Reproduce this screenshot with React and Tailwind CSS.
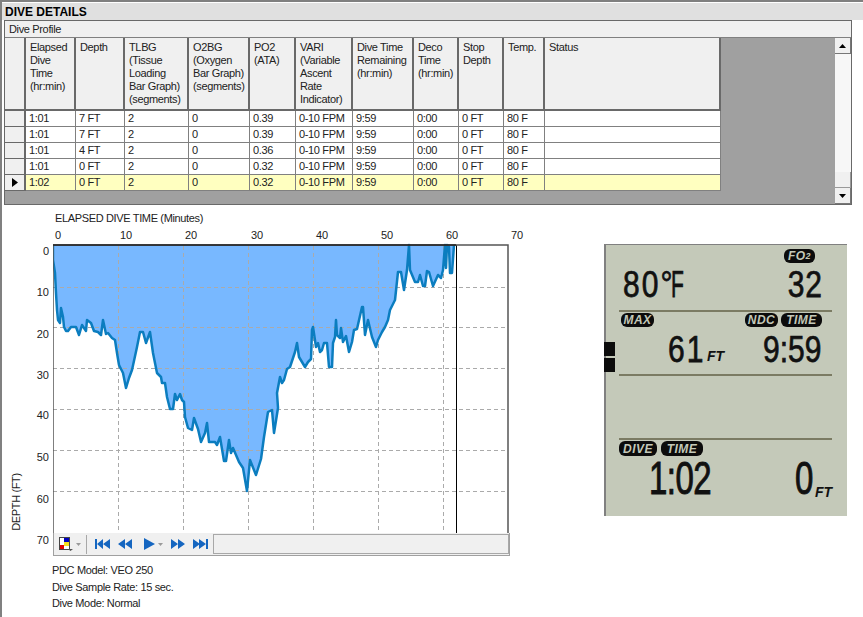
import React from 'react';

const columns = [
  ['Elapsed', 'Dive', 'Time', '(hr:min)'],
  ['Depth'],
  ['TLBG', '(Tissue', 'Loading', 'Bar Graph)', '(segments)'],
  ['O2BG', '(Oxygen', 'Bar Graph)', '(segments)'],
  ['PO2', '(ATA)'],
  ['VARI', '(Variable', 'Ascent', 'Rate', 'Indicator)'],
  ['Dive Time', 'Remaining', '(hr:min)'],
  ['Deco', 'Time', '(hr:min)'],
  ['Stop', 'Depth'],
  ['Temp.'],
  ['Status'],
];

const rows = [
  ['1:01', '7 FT', '2', '0', '0.39', '0-10 FPM', '9:59', '0:00', '0 FT', '80 F', ''],
  ['1:01', '7 FT', '2', '0', '0.39', '0-10 FPM', '9:59', '0:00', '0 FT', '80 F', ''],
  ['1:01', '4 FT', '2', '0', '0.36', '0-10 FPM', '9:59', '0:00', '0 FT', '80 F', ''],
  ['1:01', '0 FT', '2', '0', '0.32', '0-10 FPM', '9:59', '0:00', '0 FT', '80 F', ''],
  ['1:02', '0 FT', '2', '0', '0.32', '0-10 FPM', '9:59', '0:00', '0 FT', '80 F', ''],
];

const gridCols = 'grid grid-cols-[21px_50px_49px_64px_61px_46px_57px_61px_45px_45px_41px_176px]';

// dive trace, screen coordinates traced from the reference
const descent = [[53,245],[53,260],[55,273],[56,293],[57,310],[58,320],[60,323],[61,308],[63,317],[64,327],[66,331],[68,331],[71,327],[76,327],[79,335],[82,325],[86,331],[87,320],[91,323],[94,331],[98,332],[101,335],[103,320],[106,334],[108,333],[112,338],[115,340],[117,353],[119,365],[123,373],[126,388],[129,378],[132,370],[137,347],[140,332],[143,332],[146,343],[150,332],[153,353],[157,373],[161,377],[162,383],[165,383],[167,397],[170,409],[173,409],[175,394],[177,400],[180,394],[182,400],[184,402]];
const bottom = [[185,417],[188,428],[192,430],[194,418],[198,429],[201,442],[205,433],[207,423],[209,442],[215,442],[217,445],[220,437],[224,461],[226,461],[229,440],[231,453],[233,448],[239,462],[243,468],[247,491],[250,460],[256,475],[261,459],[264,437],[268,412],[272,410],[274,433],[278,408]];
const ascent = [[277,393],[280,377],[282,383],[284,380],[287,369],[290,367],[295,352],[297,343],[299,357],[305,367],[308,362],[311,359],[312,330],[313,327],[316,347],[318,343],[320,352],[322,350],[324,343],[327,343],[329,367],[332,367],[333,343],[335,337],[336,320],[337,335],[340,338],[341,328],[343,342],[346,336],[349,352],[352,342],[354,330],[357,329],[362,307],[363,307],[365,335],[368,320],[372,337],[376,347],[378,340],[382,332],[385,327],[388,320],[390,310],[395,300],[398,272],[401,272],[404,290],[407,270],[409,245],[410,270],[415,282],[418,282],[420,275],[423,286],[425,286],[427,271],[429,272],[433,286],[438,275],[441,278],[443,270],[445,245],[446,268],[447,245],[449,247],[450,273],[452,273],[454,245]];
const trace = [...descent, ...bottom, ...ascent];
const tracePath = trace.map(([x, y]) => `${x},${y}`).join(' ');

const xTicks = [[58, '0'], [126, '10'], [191, '20'], [257, '30'], [322, '40'], [387, '50'], [452, '60'], [517, '70']];
const yTicks = [[255, '0'], [296, '10'], [338, '20'], [379, '30'], [419, '40'], [461, '50'], [503, '60'], [544, '70']];

const ProfileChart = () => (
  <svg width="472" height="320" viewBox="53 213 472 320" className="block">
    <text x="55" y="222" className="text-[11px] fill-[#222]">ELAPSED DIVE TIME (Minutes)</text>
    {xTicks.map(([x, label]) => (
      <text key={label} x={x} y="239" textAnchor="middle" className="text-[11px] tracking-normal fill-[#222]">{label}</text>
    ))}
    <rect x="53" y="245" width="455" height="288" fill="#fff" />
    <polygon points={`${tracePath} 454,245`} fill="#78b8ff" />
    {[118, 183, 248, 313, 378, 443].map((x) => (
      <line key={x} x1={x + 0.5} y1="246" x2={x + 0.5} y2="533" stroke="#aaa" strokeDasharray="4 3" />
    ))}
    {[287, 327, 368, 409, 450, 491].map((y) => (
      <line key={y} x1="53" y1={y + 0.5} x2="508" y2={y + 0.5} stroke="#aaa" strokeDasharray="4 3" />
    ))}
    <polyline points={tracePath} fill="none" stroke="#0b7dbf" strokeWidth="2.5" strokeLinejoin="round" />
    <line x1="456.5" y1="245" x2="456.5" y2="533" stroke="#000" />
    <path d="M53 533V245H508V533" fill="none" stroke="#555" strokeWidth="1.5" />
    <line x1="53" y1="245" x2="456" y2="245" stroke="#222" strokeWidth="1.5" />
  </svg>
);

const DepthAxis = () => (
  <svg width="51" height="343" viewBox="2 213 51 343" className="block shrink-0">
    {yTicks.map(([y, label]) => (
      <text key={label} x="49" y={y} textAnchor="end" className="text-[11px] tracking-normal fill-[#222]">{label}</text>
    ))}
    <text x="20" y="502" textAnchor="middle" transform="rotate(-90 20 502)" className="text-[11px] fill-[#222]">DEPTH (FT)</text>
  </svg>
);

const SmallArrow = () => (
  <svg width="5" height="3" viewBox="0 0 5 3" className="block"><polygon points="0,0 5,0 2.5,3" fill="#9a9a9a" /></svg>
);

const ColorIcon = () => (
  <svg width="14" height="14" viewBox="0 0 14 14" className="block">
    <rect x="0.5" y="0.5" width="10" height="12" fill="#fff" stroke="#444" />
    <rect x="5" y="1" width="5" height="4" fill="#0000c0" />
    <rect x="5" y="5" width="5" height="4" fill="#f5e020" />
    <rect x="1" y="8" width="4" height="4" fill="#e00000" />
    <polygon points="9,12 14,12 11.5,14" fill="#555" />
  </svg>
);

const NavIcon = ({ d }) => (
  <svg width="15" height="10" viewBox="0 0 15 10" className="block"><path d={d} fill="#1566c0" /></svg>
);

const Toolbar = () => (
  <div className="flex h-[23px] w-[457px] items-center border border-t-0 border-[#a0a0a0] bg-[#f0f0f0]">
    <div className="ml-[5px]"><ColorIcon /></div>
    <div className="ml-[3px]"><SmallArrow /></div>
    <div className="ml-[5px] h-[19px] w-px bg-[#a8a8a8]" />
    <div className="ml-[8px]"><NavIcon d="M0 0h2v10H0zM2 5l6-5v10zM8 5l7-5v10z" /></div>
    <div className="ml-[8px]"><NavIcon d="M0 5l7-5v10zM7 5l7-5v10z" /></div>
    <svg width="11" height="12" viewBox="0 0 11 12" className="ml-[11px] block"><polygon points="0,0 11,6 0,12" fill="#1566c0" /></svg>
    <div className="ml-[3px]"><SmallArrow /></div>
    <div className="ml-[8px]"><NavIcon d="M0 0l7 5-7 5zM7 0l7 5-7 5z" /></div>
    <div className="ml-[7px]"><NavIcon d="M0 0l7 5-7 5zM6 0l7 5-7 5zM13 0h2v10h-2z" /></div>
    <div className="ml-[5px] h-[20px] flex-1 border border-[#a8a8a8] bg-[#f0f0f0]" />
  </div>
);

const Pill = ({ children, className = '' }) => (
  <span className={`flex h-[14px] items-center justify-center rounded-[6px] bg-[#0c0c0c] text-[12px] font-bold italic leading-none tracking-[0.5px] text-[#c4c9b9] ${className}`}>
    {children}
  </span>
);

const LcdLine = () => <div className="ml-[13px] mr-[15px] h-[2px] bg-[#7b7b63]" />;

const Lcd = () => (
  <div className="relative mt-[31px] h-[272px] w-[243px] border-l-2 border-t border-[#808080] bg-[#c4c9b9] tracking-normal text-[#111]">
    <div className="flex justify-end pr-[32px] pt-[4px]"><Pill className="w-[31px]">FO<span className="text-[9px]">2</span></Pill></div>
    <div className="mt-[7px] flex h-[27px] justify-between pl-[17px] pr-[24px] text-[30px] leading-[27px] [-webkit-text-stroke:0.6px_#111]">
      <span className="scale-y-[1.25] tracking-[2px]">80<span className="tracking-[-1px]">°</span><span className="inline-block origin-left scale-x-[.7]">F</span></span>
      <span className="scale-y-[1.25] tracking-[1px]">32</span>
    </div>
    <div className="mt-[13px]"><LcdLine /></div>
    <div className="mt-px flex pl-[15px]">
      <Pill className="w-[33px]">MAX</Pill>
      <Pill className="ml-[91px] w-[33px]">NDC</Pill>
      <Pill className="ml-[3px] w-[41px]">TIME</Pill>
    </div>
    <div className="mt-[8px] flex h-[27px] pl-[62px] text-[30px] leading-[27px] [-webkit-text-stroke:0.6px_#111]">
      <span className="w-[39px] scale-y-[1.25] tracking-[2px]">61</span>
      <span className="mt-[16px] h-[11px] w-[16px] text-[14px] font-bold italic leading-[11px] [-webkit-text-stroke:0]">FT</span>
      <span className="ml-[40px] scale-y-[1.25]">9:59</span>
    </div>
    <div className="mt-[12px]"><LcdLine /></div>
    <div className="mt-[62px]"><LcdLine /></div>
    <div className="mt-px flex pl-[13px]">
      <Pill className="h-[15px] w-[38px]">DIVE</Pill>
      <Pill className="ml-[4px] h-[15px] w-[42px]">TIME</Pill>
    </div>
    <div className="mt-[10px] flex h-[26px] pl-[43px] text-[33px] leading-[26px] [-webkit-text-stroke:0.7px_#111]">
      <span className="w-[146px] scale-y-[1.38] tracking-[-0.5px]">1:02</span>
      <span className="w-[20px] scale-y-[1.38]">0</span>
      <span className="mt-[21px] h-[11px] text-[14px] font-bold italic leading-[11px] [-webkit-text-stroke:0]">FT</span>
    </div>
    {/* ascent bar sits over the left edge of the display */}
    <div className="absolute left-[-2px] top-[97px] h-[14px] w-[11px] bg-[#0c0c0c]" />
    <div className="absolute left-[-2px] top-[113px] h-[14px] w-[11px] bg-[#0c0c0c]" />
  </div>
);

const ScrollButton = ({ up }) => (
  <div className="flex h-[16px] w-[16px] items-center justify-center border-b border-r border-[#777] border-l-white border-t-white bg-[#f0f0f0]">
    <svg width="7" height="4" viewBox="0 0 7 4" className="block">
      <polygon points={up ? '0,4 7,4 3.5,0' : '0,0 7,0 3.5,4'} fill="#000" />
    </svg>
  </div>
);

const Scrollbar = () => (
  <div className="flex w-[16px] flex-col bg-[#f7f7f7]">
    <ScrollButton up />
    <div className="flex-1" />
    <div className="h-[16px] w-[16px] border-b border-r border-[#999] bg-[#f0f0f0]" />
    <ScrollButton />
  </div>
);

const App = () => {
  return (
    <div className="h-[617px] w-[863px] overflow-hidden border-l-2 border-t-2 border-[#808080] bg-white text-[11px] tracking-[-0.35px] text-[#222] font-['Liberation_Sans',sans-serif]">
      <div className="mt-px flex h-[17px] items-center bg-[#e0e0e0] pl-[3px] text-[12px] font-bold leading-none tracking-normal text-black">DIVE DETAILS</div>

      {/* Dive Profile panel */}
      <div className="ml-[2px] w-[848px] border border-[#696969]">
        <div className="flex h-[17px] items-center border-b border-[#808080] bg-[#f0f0f0] pl-[4px]">Dive Profile</div>
        <div className="flex h-[166px]">
          <div className="flex-1 bg-[#a0a0a0]">
            <div className={`${gridCols} h-[73px]`}>
              <div className="border-b-2 border-r-2 border-[#696969] bg-[#f0f0f0]" />
              {columns.map((lines) => (
                <div key={lines[0]} className="border-b-2 border-r-2 border-[#696969] bg-[#f0f0f0] pl-[4px] pt-[3px] leading-[13px]">
                  {lines.map((line) => <div key={line}>{line}</div>)}
                </div>
              ))}
            </div>
            {rows.map((row, i) => {
              const selected = i === rows.length - 1;
              return (
                <div key={i} className={`${gridCols} h-[16px]`}>
                  <div className="flex items-center justify-center border-b border-r-2 border-[#696969] bg-[#f0f0f0]">
                    {selected && (
                      <svg width="6" height="9" viewBox="0 0 6 9" className="block"><polygon points="0,0 6,4.5 0,9" fill="#000" /></svg>
                    )}
                  </div>
                  {row.map((cell, j) => (
                    <div key={j} className={`border-b border-r border-[#808080] pl-[3px] leading-[15px] ${selected ? 'bg-[#ffffc0]' : 'bg-white'}`}>{cell}</div>
                  ))}
                </div>
              );
            })}
          </div>
          <Scrollbar />
        </div>
      </div>

      <div className="flex pt-[8px]">
        <DepthAxis />
        <div className="w-[551px] shrink-0">
          <ProfileChart />
          <Toolbar />
          <div className="mt-[6px] -ml-px leading-[16.5px]">
            <div>PDC Model: VEO 250</div>
            <div>Dive Sample Rate: 15 sec.</div>
            <div>Dive Mode: Normal</div>
          </div>
        </div>
        <Lcd />
      </div>
    </div>
  );
};

export default App;
